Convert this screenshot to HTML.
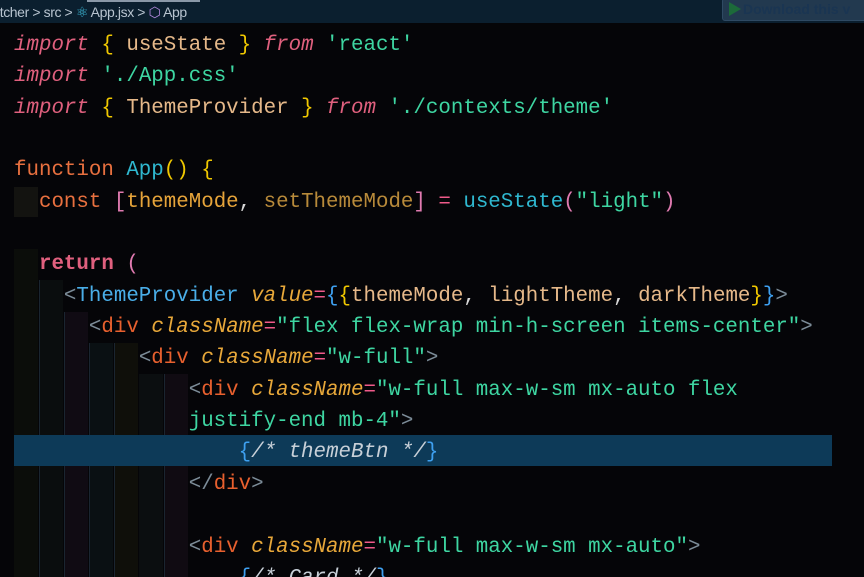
<!DOCTYPE html>
<html><head><meta charset="utf-8"><style>
html,body{margin:0;padding:0;background:#050508;width:864px;height:577px;overflow:hidden;position:relative}
.bar{position:absolute;left:0;top:0;width:864px;height:23px;background:#0b1f2f;font-family:"Liberation Sans",sans-serif;font-size:14px;color:#b8c4d0;}
.bar .crumb{position:absolute;left:-3px;top:4px;white-space:nowrap;letter-spacing:-0.4px}
.tabline{position:absolute;left:87px;top:0;width:113px;height:2px;background:#8a98a8}
.dl{position:absolute;left:722px;top:-2px;width:150px;height:21px;background:#22394f;border:1px solid #2f4a63;border-radius:3px;font-family:"Liberation Sans",sans-serif;font-weight:bold;font-size:14px;color:#1a3552;line-height:20px;white-space:nowrap}
.dl i{display:inline-block;width:0;height:0;border-left:12px solid #1c6a3a;border-top:7px solid transparent;border-bottom:7px solid transparent;margin:0 2px 0 6px;vertical-align:-2px}
.code{position:absolute;left:14px;top:30px;height:547px;overflow:hidden;font-family:"Liberation Mono",monospace;font-size:20.8px;line-height:31.35px;white-space:pre;color:#d8d8d8}
.hl{position:absolute;left:14px;top:435px;width:818px;height:31px;background:#0d3a58}
.g{position:absolute;top:0;width:1px;height:577px;background:#1a2530}
.band{position:absolute;width:24px}
.k{color:#e0607e;font-style:italic}.kw{color:#e0607e}.fn{color:#e8703f}
.y{color:#f0c800}.v{color:#e6b98a}.s{color:#3ed6a2}.c{color:#2fb8d0}
.o{color:#e6a43a}.tg{color:#e8602e}.at{color:#e8a83a;font-style:italic}
.eq{color:#f05a8a}.p{color:#e07ab0}.b{color:#3ea0f0}.cm{color:#c8d0d8;font-style:italic}.lt{color:#7c8c98}
.tp{color:#4aaee8}
</style></head><body>
<div class="bar"><div class="tabline"></div><div class="crumb">itcher &gt; src &gt; <span style="color:#3fc0e0">⚛</span> App.jsx &gt; <span style="color:#b58be0">⬡</span> App</div>
<div class="dl"><i></i>Download this v</div></div>
<div class="band" style="left:14px;top:187px;height:30px;background:#131310"></div>
<div class="band" style="left:14px;top:249px;height:328px;background:#0b0d0a"></div>
<div class="band" style="left:39px;top:280px;height:297px;background:#0a0d0e"></div>
<div class="band" style="left:64px;top:312px;height:265px;background:#100b13"></div>
<div class="band" style="left:89px;top:343px;height:234px;background:#0a1013"></div>
<div class="band" style="left:114px;top:343px;height:234px;background:#0f0f0a"></div>
<div class="band" style="left:139px;top:374px;height:203px;background:#0b0e10"></div>
<div class="band" style="left:164px;top:374px;height:203px;background:#100b12"></div>
<div class="g" style="left:39px;top:280px"></div>
<div class="g" style="left:64px;top:312px"></div>
<div class="g" style="left:89px;top:343px"></div>
<div class="g" style="left:114px;top:343px"></div>
<div class="g" style="left:164px;top:374px"></div>
<div class="hl"></div>
<div class="code"><span class="k">import</span> <span class="y">{</span> <span class="v">useState</span> <span class="y">}</span> <span class="k">from</span> <span class="s">'react'</span>
<span class="k">import</span> <span class="s">'./App.css'</span>
<span class="k">import</span> <span class="y">{</span> <span class="v">ThemeProvider</span> <span class="y">}</span> <span class="k">from</span> <span class="s">'./contexts/theme'</span>

<span class="fn">function</span> <span class="c">App</span><span class="y">()</span> <span class="y">{</span>
  <span class="fn">const</span> <span class="p">[</span><span class="o">themeMode</span>, <span class="o" style="color:#b88a3a">setThemeMode</span><span class="p">]</span> <span class="eq">=</span> <span class="c">useState</span><span class="p">(</span><span class="s">"light"</span><span class="p">)</span>

  <span class="kw" style="font-weight:bold">return</span> <span class="p">(</span>
    <span class="lt">&lt;</span><span class="tp">ThemeProvider</span> <span class="at">value</span><span class="eq">=</span><span class="b">{</span><span class="y">{</span><span class="v">themeMode</span>, <span class="v">lightTheme</span>, <span class="v">darkTheme</span><span class="y">}</span><span class="b">}</span><span class="lt">&gt;</span>
      <span class="lt">&lt;</span><span class="tg">div</span> <span class="at">className</span><span class="eq">=</span><span class="s">"flex flex-wrap min-h-screen items-center"</span><span class="lt">&gt;</span>
          <span class="lt">&lt;</span><span class="tg">div</span> <span class="at">className</span><span class="eq">=</span><span class="s">"w-full"</span><span class="lt">&gt;</span>
              <span class="lt">&lt;</span><span class="tg">div</span> <span class="at">className</span><span class="eq">=</span><span class="s">"w-full max-w-sm mx-auto flex</span>
<span class="s">              justify-end mb-4"</span><span class="lt">&gt;</span>
                  <span class="b">{</span><span class="cm">/* themeBtn */</span><span class="b">}</span>
              <span class="lt">&lt;/</span><span class="tg">div</span><span class="lt">&gt;</span>

              <span class="lt">&lt;</span><span class="tg">div</span> <span class="at">className</span><span class="eq">=</span><span class="s">"w-full max-w-sm mx-auto"</span><span class="lt">&gt;</span>
                  <span class="b">{</span><span class="cm">/* Card */</span><span class="b">}</span></div>
</body></html>
